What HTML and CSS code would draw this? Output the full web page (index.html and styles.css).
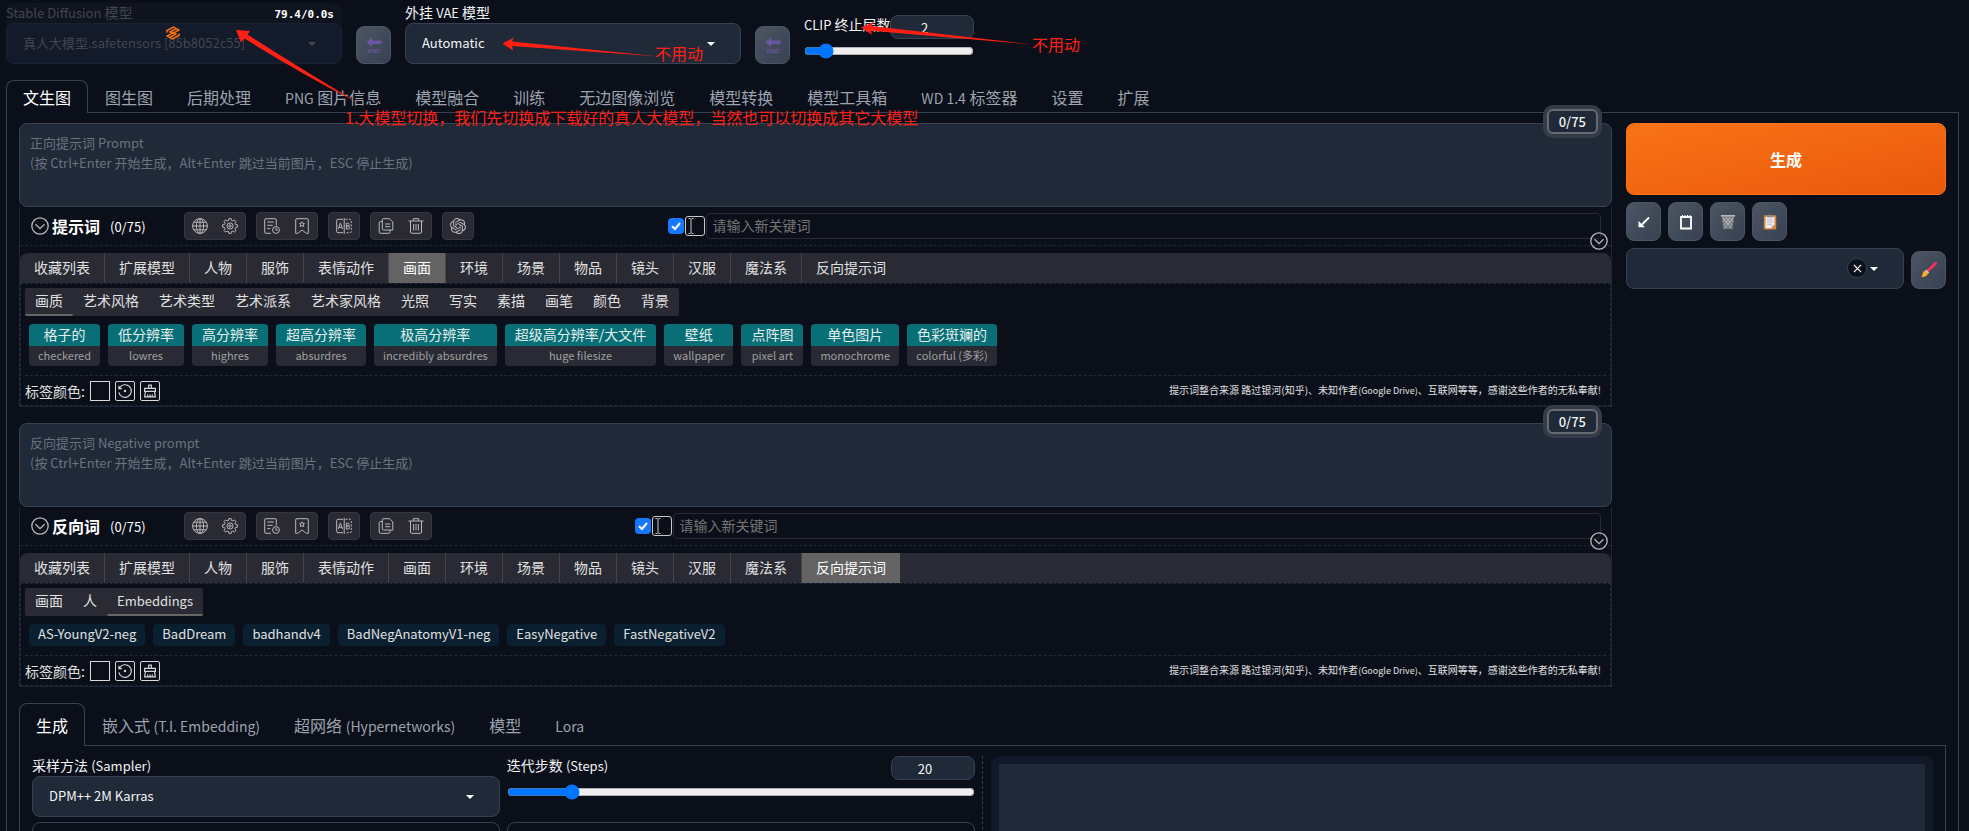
FILE: index.html
```html
<!DOCTYPE html>
<html lang="zh-CN">
<head>
<meta charset="utf-8">
<title>Stable Diffusion</title>
<link rel="stylesheet" href="styles.css">
</head>
<body>
<svg class="sprite" aria-hidden="true">
  <symbol id="i-down" viewBox="0 0 18 18"><circle cx="9" cy="9" r="8.2"/><path d="M4.5 7.2 9 11.6l4.5-4.4"/></symbol>
  <symbol id="i-globe" viewBox="0 0 16 16"><circle cx="8" cy="8" r="7.4"/><ellipse cx="8" cy="8" rx="3.6" ry="7.4"/><path d="M8 .6v14.8M.6 8h14.8M1.8 4.2h12.4M1.8 11.8h12.4"/></symbol>
  <symbol id="i-gear" viewBox="0 0 16 16"><path d="M6.9.6h2.2l.4 1.9 1.3.5 1.6-1.1 1.6 1.6-1.1 1.7.5 1.2 2 .4v2.4l-2 .4-.5 1.2 1.1 1.7-1.6 1.6-1.6-1.1-1.3.5-.4 1.9H6.9l-.4-1.9-1.3-.5-1.6 1.1L2 12.500l1.100-1.700-.5-1.200-2-.4V6.800l2-.4.5-1.200L2 3.500l1.600-1.600L5.200 3l1.300-.5z"/><circle cx="8" cy="8" r="3.100"/><circle cx="8" cy="8" r="1.200"/></symbol>
  <symbol id="i-history" viewBox="0 0 16 16"><path d="M7 15.300H2a1.300 1.300 0 0 1-1.300-1.300V2A1.300 1.300 0 0 1 2 .7h9A1.300 1.300 0 0 1 12.300 2v5.500M3.300 4h6.500M3.300 7.300h5.500M3.300 10.600h3"/><circle cx="12" cy="12" r="3.400"/><path d="M12 10v2.200h1.700"/></symbol>
  <symbol id="i-mark" viewBox="0 0 16 16"><path d="M1.700 15.300V2A1.300 1.300 0 0 1 3 .7h10A1.300 1.300 0 0 1 14.300 2v13.300h-2L8 12l-4.300 3.300z"/><path d="m8 3.800.8 1.500 1.700.3-1.200 1.200.3 1.700L8 7.700l-1.600.8.3-1.700-1.200-1.200 1.700-.3z"/></symbol>
  <symbol id="i-ab" viewBox="0 0 16 16"><path d="M7 1.300H2A1.300 1.300 0 0 0 .7 2.600v10.800A1.300 1.300 0 0 0 2 14.700h5M8.200 0v16M2.300 11 4.200 5.200h.4L6.500 11M3 9.300h2.800M10.300 5.200V11h1.800a1.500 1.500 0 0 0 0-3h-1.800 1.500a1.400 1.400 0 0 0 0-2.800z"/><path stroke-dasharray="2 1.400" d="M9.500 1.300h4.500a1.300 1.300 0 0 1 1.300 1.300v10.800a1.300 1.300 0 0 1-1.300 1.300H9.500"/></symbol>
  <symbol id="i-copy" viewBox="0 0 16 16"><path d="M5.500.7h6L14.800 4v8H5.500A1.200 1.200 0 0 1 4.300 10.800V2A1.200 1.200 0 0 1 5.500.7zM4.300 3.500h-1.700A1.500 1.500 0 0 0 1.200 5v9A1.300 1.300 0 0 0 2.500 15.300h8a1.500 1.500 0 0 0 1.500-1.500V12M7 6h5.300M7 8.700h5.300"/></symbol>
  <symbol id="i-trash" viewBox="0 0 16 16"><path d="M.5 3h15M5.300 2.800V.7h5.400v2.100M2.500 3v11a1.300 1.300 0 0 0 1.300 1.300h8.400A1.300 1.300 0 0 0 13.500 14V3M5.600 6v6.500M8 6v6.500M10.400 6v6.500"/></symbol>
  <symbol id="i-ai" viewBox="0 0 24 24"><path fill="currentColor" stroke="none" d="M22.280 9.820a5.980 5.980 0 0 0-.520-4.910 6.050 6.050 0 0 0-6.510-2.900A6.070 6.070 0 0 0 4.980 4.180a5.980 5.980 0 0 0-4 2.900 6.050 6.050 0 0 0 .740 7.100 5.980 5.980 0 0 0 .510 4.910 6.050 6.050 0 0 0 6.510 2.900A5.980 5.980 0 0 0 13.260 24a6.060 6.060 0 0 0 5.770-4.210 5.990 5.990 0 0 0 4-2.900 6.060 6.060 0 0 0-.750-7.070zm-9.020 12.610a4.480 4.480 0 0 1-2.880-1.040l.14-.08 4.780-2.760a.8.8 0 0 0 .390-.680v-6.740l2.020 1.170.04.05v5.580a4.500 4.500 0 0 1-4.490 4.500zM3.600 18.300a4.470 4.470 0 0 1-.540-3.010l.14.090 4.780 2.760a.77.77 0 0 0 .78 0l5.840-3.370v2.330l-.03.06-4.830 2.790A4.500 4.500 0 0 1 3.600 18.300zM2.340 7.900a4.490 4.490 0 0 1 2.370-1.980v5.680a.77.77 0 0 0 .39.68l5.810 3.350-2.020 1.170h-.07l-4.830-2.790A4.500 4.500 0 0 1 2.340 7.900zm16.600 3.860-5.840-3.390 2.020-1.160h.07l4.830 2.790a4.490 4.490 0 0 1-.68 8.100v-5.680a.79.79 0 0 0-.4-.66zm2.010-3.020-.14-.09-4.770-2.780a.78.78 0 0 0-.79 0L9.410 9.230V6.900l.03-.06 4.830-2.790a4.500 4.500 0 0 1 6.680 4.660zM8.310 12.860l-2.020-1.160-.04-.06V6.070a4.500 4.500 0 0 1 7.380-3.450l-.14.080-4.780 2.760a.8.8 0 0 0-.39.680zm1.100-2.370L12 9l2.600 1.500v3L12 15l-2.600-1.500z"/></symbol>
  <symbol id="i-reset" viewBox="0 0 20 20"><path d="M4 6.500A7 7 0 1 1 3.200 11.500M3.200 4.200v3.200h3.300"/><circle cx="10" cy="10" r="1.300" fill="currentColor" stroke="none"/></symbol>
  <symbol id="i-brush" viewBox="0 0 20 20"><path d="M8.500 7V3.500h3V7M4 7h12v3.500H4zM5 10.500 4 16.500h12l-1-6M7.500 16.500v-2.500M10 16.500v-2.500M12.500 16.500v-2.500"/></symbol>
  <symbol id="i-end" viewBox="0 0 16 18"><path fill="#6b55a0" d="M.5 6.200 6 1.200V4.400h9.500v3.700H6v3.100z"/></symbol>
</svg>

<header class="quick">
  <div class="field quick-select loading">
    <label for="ckpt"><span class="en">Stable Diffusion</span> 模型</label>
    <div class="select"><select id="ckpt"><option>真人大模型.safetensors [85b8052c55]</option></select></div>
    <span class="timer">79.4/0.0s</span>
    <svg class="spinner" viewBox="0 0 14 14"><path fill="none" stroke="#f97316" stroke-width="1.500" d="M1 6.500v-2L7.500 1 13 4 6.800 7.500 4 6l5.500-3M13 7.500v2L6.500 13 1 10l6.200-3.500L10 8l-5.500 3"/></svg>
  </div>
  <button class="tool" aria-label="刷新模型"><svg class="end" viewBox="0 0 16 18"><use href="#i-end"/><text x="8" y="17">END</text></svg></button>
  <div class="field quick-select">
    <label for="vae">外挂 <span class="en">VAE</span> 模型</label>
    <div class="select"><select id="vae"><option>Automatic</option></select></div>
  </div>
  <button class="tool" aria-label="刷新 VAE"><svg class="end" viewBox="0 0 16 18"><use href="#i-end"/><text x="8" y="17">END</text></svg></button>
  <div class="slider clip">
    <div class="slider-head"><label for="clip"><span class="en">CLIP</span> 终止层数</label><input class="num" type="number" aria-label="CLIP 终止层数" value="2"></div>
    <input id="clip" type="range" min="1" max="12" value="2">
  </div>
</header>

<nav class="tabs main-tabs">
  <button class="tab on">文生图</button><button class="tab">图生图</button><button class="tab">后期处理</button><button class="tab"><span class="en">PNG</span> 图片信息</button><button class="tab">模型融合</button><button class="tab">训练</button><button class="tab">无边图像浏览</button><button class="tab">模型转换</button><button class="tab">模型工具箱</button><button class="tab"><span class="en">WD 1.4</span> 标签器</button><button class="tab">设置</button><button class="tab">扩展</button>
</nav>

<main class="page">
  <div class="top">
    <div class="prompts">
      <section class="prompt">
        <textarea aria-label="正向提示词" placeholder="正向提示词 Prompt&#10;(按 Ctrl+Enter 开始生成，Alt+Enter 跳过当前图片，ESC 停止生成)"></textarea>
        <span class="counter">0/75</span>
        <div class="panel">
          <div class="bar">
            <div class="bar-title"><svg class="ico circle"><use href="#i-down"/></svg><strong>提示词</strong><span class="en">(0/75)</span></div>
            <div class="groups">
              <div class="group"><button aria-label="语言"><svg class="ico"><use href="#i-globe"/></svg></button><button aria-label="设置"><svg class="ico"><use href="#i-gear"/></svg></button></div>
              <div class="group"><button aria-label="历史"><svg class="ico"><use href="#i-history"/></svg></button><button aria-label="收藏"><svg class="ico"><use href="#i-mark"/></svg></button></div>
              <div class="group"><button aria-label="翻译"><svg class="ico"><use href="#i-ab"/></svg></button></div>
              <div class="group"><button aria-label="复制"><svg class="ico"><use href="#i-copy"/></svg></button><button aria-label="删除"><svg class="ico"><use href="#i-trash"/></svg></button></div>
              <div class="group"><button aria-label="ChatGPT"><svg class="ico"><use href="#i-ai"/></svg></button></div>
            </div>
            <div class="adder"><input type="checkbox" aria-label="启用" checked><span class="caret-box"><svg viewBox="0 0 18 18"><path d="M2.500 1.500h1.700L5 2.500l.8-1h1.700M5 2.500v13M2.500 16.500h1.700l.8-1 .8 1h1.700"/></svg></span><input class="word" type="text" aria-label="新关键词" placeholder="请输入新关键词"></div>
            <button class="fold" aria-label="折叠"><svg class="ico circle"><use href="#i-down"/></svg></button>
          </div>
          <div class="cats"><button>收藏列表</button><button>扩展模型</button><button>人物</button><button>服饰</button><button>表情动作</button><button class="on">画面</button><button>环境</button><button>场景</button><button>物品</button><button>镜头</button><button>汉服</button><button>魔法系</button><button>反向提示词</button></div>
          <div class="body">
            <div class="subs"><button class="on">画质</button><button>艺术风格</button><button>艺术类型</button><button>艺术派系</button><button>艺术家风格</button><button>光照</button><button>写实</button><button>素描</button><button>画笔</button><button>颜色</button><button>背景</button></div>
            <div class="tags">
              <button class="tag"><b>格子的</b><i>checkered</i></button>
              <button class="tag"><b>低分辨率</b><i>lowres</i></button>
              <button class="tag"><b>高分辨率</b><i>highres</i></button>
              <button class="tag"><b>超高分辨率</b><i>absurdres</i></button>
              <button class="tag"><b>极高分辨率</b><i>incredibly absurdres</i></button>
              <button class="tag"><b>超级高分辨率/大文件</b><i>huge filesize</i></button>
              <button class="tag"><b>壁纸</b><i>wallpaper</i></button>
              <button class="tag"><b>点阵图</b><i>pixel art</i></button>
              <button class="tag"><b>单色图片</b><i>monochrome</i></button>
              <button class="tag"><b>色彩斑斓的</b><i>colorful (多彩)</i></button>
            </div>
            <div class="foot"><span>标签颜色:</span><button class="sw" aria-label="颜色"></button><button class="sw round" aria-label="重置"><svg class="ico"><use href="#i-reset"/></svg></button><button class="sw round" aria-label="清空"><svg class="ico"><use href="#i-brush"/></svg></button><small>提示词整合来源 路过银河(知乎)、未知作者<span class="en">(Google Drive)</span>、互联网等等，感谢这些作者的无私奉献!</small></div>
          </div>
        </div>
      </section>

      <section class="prompt negative">
        <textarea aria-label="反向提示词" placeholder="反向提示词 Negative prompt&#10;(按 Ctrl+Enter 开始生成，Alt+Enter 跳过当前图片，ESC 停止生成)"></textarea>
        <span class="counter">0/75</span>
        <div class="panel">
          <div class="bar">
            <div class="bar-title"><svg class="ico circle"><use href="#i-down"/></svg><strong>反向词</strong><span class="en">(0/75)</span></div>
            <div class="groups">
              <div class="group"><button aria-label="语言"><svg class="ico"><use href="#i-globe"/></svg></button><button aria-label="设置"><svg class="ico"><use href="#i-gear"/></svg></button></div>
              <div class="group"><button aria-label="历史"><svg class="ico"><use href="#i-history"/></svg></button><button aria-label="收藏"><svg class="ico"><use href="#i-mark"/></svg></button></div>
              <div class="group"><button aria-label="翻译"><svg class="ico"><use href="#i-ab"/></svg></button></div>
              <div class="group"><button aria-label="复制"><svg class="ico"><use href="#i-copy"/></svg></button><button aria-label="删除"><svg class="ico"><use href="#i-trash"/></svg></button></div>
            </div>
            <div class="adder"><input type="checkbox" aria-label="启用" checked><span class="caret-box"><svg viewBox="0 0 18 18"><path d="M2.500 1.500h1.700L5 2.500l.8-1h1.700M5 2.500v13M2.500 16.500h1.700l.8-1 .8 1h1.700"/></svg></span><input class="word" type="text" aria-label="新关键词" placeholder="请输入新关键词"></div>
            <button class="fold" aria-label="折叠"><svg class="ico circle"><use href="#i-down"/></svg></button>
          </div>
          <div class="cats"><button>收藏列表</button><button>扩展模型</button><button>人物</button><button>服饰</button><button>表情动作</button><button>画面</button><button>环境</button><button>场景</button><button>物品</button><button>镜头</button><button>汉服</button><button>魔法系</button><button class="on">反向提示词</button></div>
          <div class="body">
            <div class="subs"><button>画面</button><button>人</button><button class="on"><span class="en">Embeddings</span></button></div>
            <div class="tags">
              <button class="tag plain">AS-YoungV2-neg</button>
              <button class="tag plain">BadDream</button>
              <button class="tag plain">badhandv4</button>
              <button class="tag plain">BadNegAnatomyV1-neg</button>
              <button class="tag plain">EasyNegative</button>
              <button class="tag plain">FastNegativeV2</button>
            </div>
            <div class="foot"><span>标签颜色:</span><button class="sw" aria-label="颜色"></button><button class="sw round" aria-label="重置"><svg class="ico"><use href="#i-reset"/></svg></button><button class="sw round" aria-label="清空"><svg class="ico"><use href="#i-brush"/></svg></button><small>提示词整合来源 路过银河(知乎)、未知作者<span class="en">(Google Drive)</span>、互联网等等，感谢这些作者的无私奉献!</small></div>
          </div>
        </div>
      </section>
    </div>

    <aside class="actions">
      <button class="generate">生成</button>
      <div class="tools">
        <button class="tool tall" aria-label="读取参数"><svg viewBox="0 0 16 16"><path d="M13 3.500 6 10.500" stroke="#fff" stroke-width="1.800"/><path d="M2.500 7v6.200H9z" fill="#fff"/></svg></button>
        <button class="tool tall" aria-label="历史"><svg viewBox="0 0 16 16"><path d="M3 3h10v11.500H3z" fill="none" stroke="#fff" stroke-width="1.800"/><path d="M4.500 1v2M7 1v2M9.500 1v2M12 1v2" stroke="#fff"/></svg></button>
        <button class="tool tall" aria-label="清空"><svg viewBox="0 0 18 18"><path d="M2 2.500h14l-2 14.500H4z" fill="#777b80"/><path d="m3 4 10 12M7 4l7 9M11 4l4 5M15 4 5 16M11 4l-7 9M7 4 3 9" stroke="#c9cbcd" stroke-width=".8"/><path d="M1 2h16" stroke="#b5b7ba" stroke-width="1.800"/></svg></button>
        <button class="tool tall" aria-label="粘贴"><svg viewBox="0 0 16 18"><rect x="1" y="1.500" width="14" height="16" rx="1.500" fill="#d9863a"/><path d="M3 3.500h10V12l-3.500 4H3z" fill="#f1eef5"/><path d="M4.500 6.500h7M4.500 9h7M4.500 11.500h5" stroke="#b4abc0"/><path d="M13 12 9.500 16v-4z" fill="#c9c0d6"/><path d="M5 1.500h1.800a1.300 1.300 0 0 1 2.400 0H11v2.300H5z" fill="#8b8f98"/></svg></button>
      </div>
      <div class="styles">
        <div class="select clearable"><select aria-label="样式"><option></option></select><button class="clear" aria-label="清除"><svg viewBox="0 0 10 10"><path d="m1 1 8 8M9 1 1 9"/></svg></button></div>
        <button class="tool" aria-label="编辑样式"><svg viewBox="0 0 16 16"><path d="M14.500 1.500 7 8.500" stroke="#f5305c" stroke-width="3" stroke-linecap="round"/><path d="m5.200 7.500 3 3-1.200 1.200-3-3z" fill="#c7ccd3"/><path d="M4.200 8.800 7 11.600C5.700 14.800 3 15.200.5 15c1.400-1.400.6-5.700 3.700-6.200z" fill="#fbab2a"/></svg></button>
      </div>
    </aside>
  </div>

  <nav class="tabs sub-tabs">
    <button class="tab on">生成</button><button class="tab">嵌入式 <span class="en">(T.I. Embedding)</span></button><button class="tab">超网络 <span class="en">(Hypernetworks)</span></button><button class="tab">模型</button><button class="tab"><span class="en">Lora</span></button>
  </nav>
  <section class="work">
    <div class="settings">
      <div class="field">
        <label for="sampler">采样方法 <span class="en">(Sampler)</span></label>
        <div class="select"><select id="sampler"><option>DPM++ 2M Karras</option></select></div>
      </div>
      <div class="slider">
        <div class="slider-head"><label for="steps">迭代步数 <span class="en">(Steps)</span></label><input class="num" type="number" aria-label="迭代步数 (Steps)" value="20"></div>
        <input id="steps" type="range" min="1" max="150" value="20">
      </div>
      <div class="card"></div>
      <div class="card"></div>
    </div>
    <div class="divider"></div>
    <div class="gallery"><div class="gallery-in"></div></div>
  </section>
</main>

<div class="notes">
  <svg width="1100" height="130"><g fill="#ff2015"><path d="M236 30 250 31 247.500 34.500Q300 68 360 104 298 72 244.500 38.500L241 42.500z"/><path d="M502.500 43.500 514 37.500 512 41.500 659 56.500 512 46 513 50.500z"/><path d="M861 27.500 874 21.700 871.500 26 1034 44.700 871 30.700 872 34.700z"/></g></svg>
  <span class="note n1">1.大模型切换，我们先切换成下载好的真人大模型，当然也可以切换成其它大模型</span>
  <span class="note n2">不用动</span>
  <span class="note n3">不用动</span>
</div>
</body>
</html>
```
FILE: styles.css
```css
* { box-sizing: border-box; }
html { scrollbar-width: none; background: #0b0f19; }
body {
  margin: 0;
  position: relative;
  color: #f3f4f6;
  font: 14px/20px "Noto Sans CJK SC", "Noto Sans", sans-serif;
}
button, input, select, textarea { font: inherit; color: inherit; margin: 0; }
button { border: 0; padding: 0; background: none; white-space: nowrap; }
label { white-space: nowrap; }
.en { font-size: 13px; line-height: 1; }
.sprite { position: absolute; width: 0; height: 0; }
.ico { width: 16px; height: 16px; fill: none; stroke: currentColor; stroke-width: 1; color: #b9b9b9; display: block; }
.circle { width: 18px; height: 18px; stroke-width: 1.3; }

/* quick settings */
.quick { display: flex; align-items: flex-end; gap: 14px; padding: 3px 6px 0; }
.field { display: flex; flex-direction: column; min-width: 0; }
.field label { line-height: 18px; padding-bottom: 2px; }
.quick-select { width: 336px; }
.select { position: relative; display: flex; }
.select select {
  appearance: none;
  width: 100%;
  height: 41px;
  padding: 0 40px 2px 16px;
  border: 1px solid #374151;
  border-radius: 8px;
  background: #1f2937;
  font-size: 13px;
}
.select::after {
  content: "";
  position: absolute;
  right: 26px;
  top: 19px;
  border: 4px solid transparent;
  border-top-color: #fff;
  border-bottom: 0;
}
.loading { position: relative; background: #10141f; border-radius: 8px; color: #42464f; }
.loading select { background: #131a29; border-color: #1a2231; color: #42464f; opacity: 1; }
.loading .select::after { border-top-color: #42464f; }
.timer { position: absolute; right: 8px; top: 5px; color: #fff; font: bold 11px/14px "DejaVu Sans Mono", "Liberation Mono", monospace; }
.spinner { position: absolute; left: 160px; top: 23px; width: 14px; height: 14px; }
.tool {
  width: 35px;
  height: 38px;
  flex: none;
  display: grid;
  place-items: center;
  border: 1px solid #4b5563;
  border-radius: 8px;
  background: linear-gradient(to bottom right, #4b5563, #374151);
}
.tool.tall { height: 39px; }
.tool svg { width: 16px; height: 16px; }
.tool .end { height: 18px; overflow: visible; }
.end text { fill: #6b55a0; font: bold 6px "Liberation Sans", sans-serif; text-anchor: middle; }
.slider-head { display: flex; justify-content: space-between; align-items: flex-start; height: 24px; }
.slider-head label { width: 86px; line-height: 18px; }
.num {
  width: 84px;
  height: 24px;
  padding: 0 8px;
  border: 1px solid #374151;
  border-radius: 8px;
  background: #1f2937;
  font-size: 13px;
  text-align: center;
}
.slider input[type="range"] { display: block; width: 100%; height: 16px; margin-top: 4px; }
.clip { width: 170px; padding-bottom: 5px; }

/* tabs */
.tabs { display: flex; position: relative; margin-bottom: -1px; }
.tab { padding: 0 16px; border: 1px solid transparent; border-bottom: 0; border-radius: 8px 8px 0 0; color: #9ca3af; font-size: 16px; }
.tab .en { font-size: 14px; }
.tab.on { border-color: #374151; background: #0b0f19; color: #fff; }
.main-tabs { padding-left: 6px; margin-top: 16px; }
.main-tabs .tab { height: 33px; }
.sub-tabs { margin-top: 16px; }
.sub-tabs .tab { height: 43px; }

.page { margin: 0 10px 0 6px; padding: 10px 12px; border: 1px solid #374151; }
.top { display: grid; grid-template-columns: minmax(0, 1fr) 320px; gap: 14px; }

/* prompts */
.prompt { position: relative; }
.negative { margin-top: 16px; }
.prompt textarea {
  display: block;
  width: 100%;
  height: 84px;
  padding: 9px 10px;
  border: 1px solid #374151;
  border-radius: 8px;
  background: #1f2937;
  font-size: 13px;
  resize: none;
}
textarea::placeholder { color: #6b7280; opacity: 1; }
.counter {
  position: absolute;
  right: 14px;
  top: -14px;
  padding: 0 10px;
  border: 2px solid #656a73;
  border-radius: 6px;
  background: #1f2937;
  box-shadow: 0 0 0 4px #363c47;
  font-size: 13px;
  font-weight: 500;
  line-height: 21px;
}
.panel { border: 1px solid #1f2733; border-top: 0; }
.bar { position: relative; display: flex; align-items: center; height: 39px; padding: 0 10px 0 11px; border-bottom: 1px dashed #1f2733; }
.bar-title { display: flex; align-items: center; width: 153px; color: #fff; }
.bar-title strong { margin: 0 10px 0 3px; font-size: 16px; }
.groups { display: flex; gap: 10px; }
.group { display: flex; border: 1px solid #35363f; border-radius: 4px; background: #292a33; }
.group button { width: 30px; height: 26px; display: grid; place-items: center; }
.adder { display: flex; align-items: center; gap: 1px; flex: none; width: 59.4%; margin-left: auto; }
.negative .adder { width: 61.5%; }
.adder input[type="checkbox"] {
  appearance: none;
  width: 16px;
  height: 16px;
  border-radius: 4px;
  background: #1677ff url("data:image/svg+xml,%3Csvg xmlns='http://www.w3.org/2000/svg' viewBox='0 0 16 16'%3E%3Cpath d='M4 8.300 7 11l5-6' fill='none' stroke='white' stroke-width='2'/%3E%3C/svg%3E");
}
.caret-box { width: 20px; height: 20px; border: 1px solid #c8c8c8; border-radius: 3px; }
.caret-box svg { display: block; width: 18px; height: 18px; fill: none; stroke: #c8c8c8; }
.word { flex: 1; min-width: 0; height: 26px; padding: 0 5px 2px; border: 1px solid #292a33; border-radius: 4px; background: none; }
.word::placeholder { color: #757575; }
.fold { position: absolute; right: 3px; bottom: -5px; }
.cats { display: flex; margin-top: 7px; border-radius: 8px 8px 0 0; background: #292a33; overflow: hidden; }
.cats button { height: 30px; padding: 0 14px 2px; border-right: 1px solid #464542; color: #e0e0e0; }
.cats button:last-child { border-right: 0; }
.cats .on { background: #636363; color: #fff; }
.body { padding: 4px; border: 1px dashed #1b2b3d; }
.subs { display: flex; width: max-content; border-radius: 2px; background: #292a33; }
.subs button { height: 28px; padding: 0 10px 2px; border-bottom: 2px solid transparent; border-radius: 2px; color: #e0e0e0; }
.subs .on { border-bottom-color: #666; }
.tags { display: flex; gap: 8px; padding: 8px 4px 9px; }
.tag { display: flex; flex-direction: column; border-radius: 4px; overflow: hidden; background: #292a33; text-align: center; }
.tag b { padding: 0 10px 2px; background: #086f76; color: #e4eeee; font-weight: 400; }
.tag i { padding: 0 9px 2px; color: #a0a0a0; font-size: 11px; font-style: normal; line-height: 18px; }
.tag.plain { padding: 0 9px 2px; background: #0a1f30; color: #e0e0e0; font-size: 13px; }
.foot { display: flex; align-items: center; gap: 5px; padding: 5px 5px 0 0; border-top: 1px dashed #1b2b3d; color: #e0e0e0; }
.sw { width: 20px; height: 20px; border: 1px solid #d8d8d8; }
.sw.round { border-radius: 2px; }
.sw .ico { width: 18px; height: 18px; color: #d8d8d8; stroke-width: 1.3; }
.foot small { margin-left: auto; font-size: 10px; line-height: 16px; padding-bottom: 2px; white-space: nowrap; }
.foot .en { font-size: 9px; }

/* actions */
.generate { display: block; width: 100%; height: 72px; border: 1px solid #f97316; border-radius: 8px; background: linear-gradient(to bottom right, #f97316, #ea580c); color: #fff; font-size: 16px; font-weight: 600; }
.tools { display: flex; gap: 7px; margin: 7px 0; }
.styles { display: flex; align-items: flex-end; gap: 7px; }
.styles .select { flex: 1; }
.clear { position: absolute; right: 37px; top: 10px; width: 20px; height: 20px; border: 1px solid #374151; border-radius: 50%; background: #0b0f19; display: grid; place-items: center; }
.clear svg { width: 9px; height: 9px; stroke: #fff; stroke-width: 1.3; }

/* generation settings */
.work { display: grid; grid-template-columns: minmax(0, 1fr) 16px minmax(0, 1fr); padding: 10px 12px; border: 1px solid #374151; }
.settings { display: grid; grid-template-columns: 1fr 1fr; gap: 5px 7px; align-content: start; }
.card { height: 60px; border: 1px solid #374151; border-radius: 8px; }
.divider { width: 0; margin: 0 auto; border-left: 1px dashed #374151; }
.gallery { min-height: 320px; padding: 8px; border-radius: 8px; background: #111827; display: flex; }
.gallery-in { flex: 1; background: #1f2937; }

/* annotations drawn over the page */
.notes { position: absolute; left: 0; top: 0; pointer-events: none; }
.notes svg { display: block; }
.note { position: absolute; color: #ff2015; font-size: 16px; white-space: nowrap; }
.n1 { left: 345px; top: 107px; }
.n2 { left: 655px; top: 43px; }
.n3 { left: 1032px; top: 34px; }
```
